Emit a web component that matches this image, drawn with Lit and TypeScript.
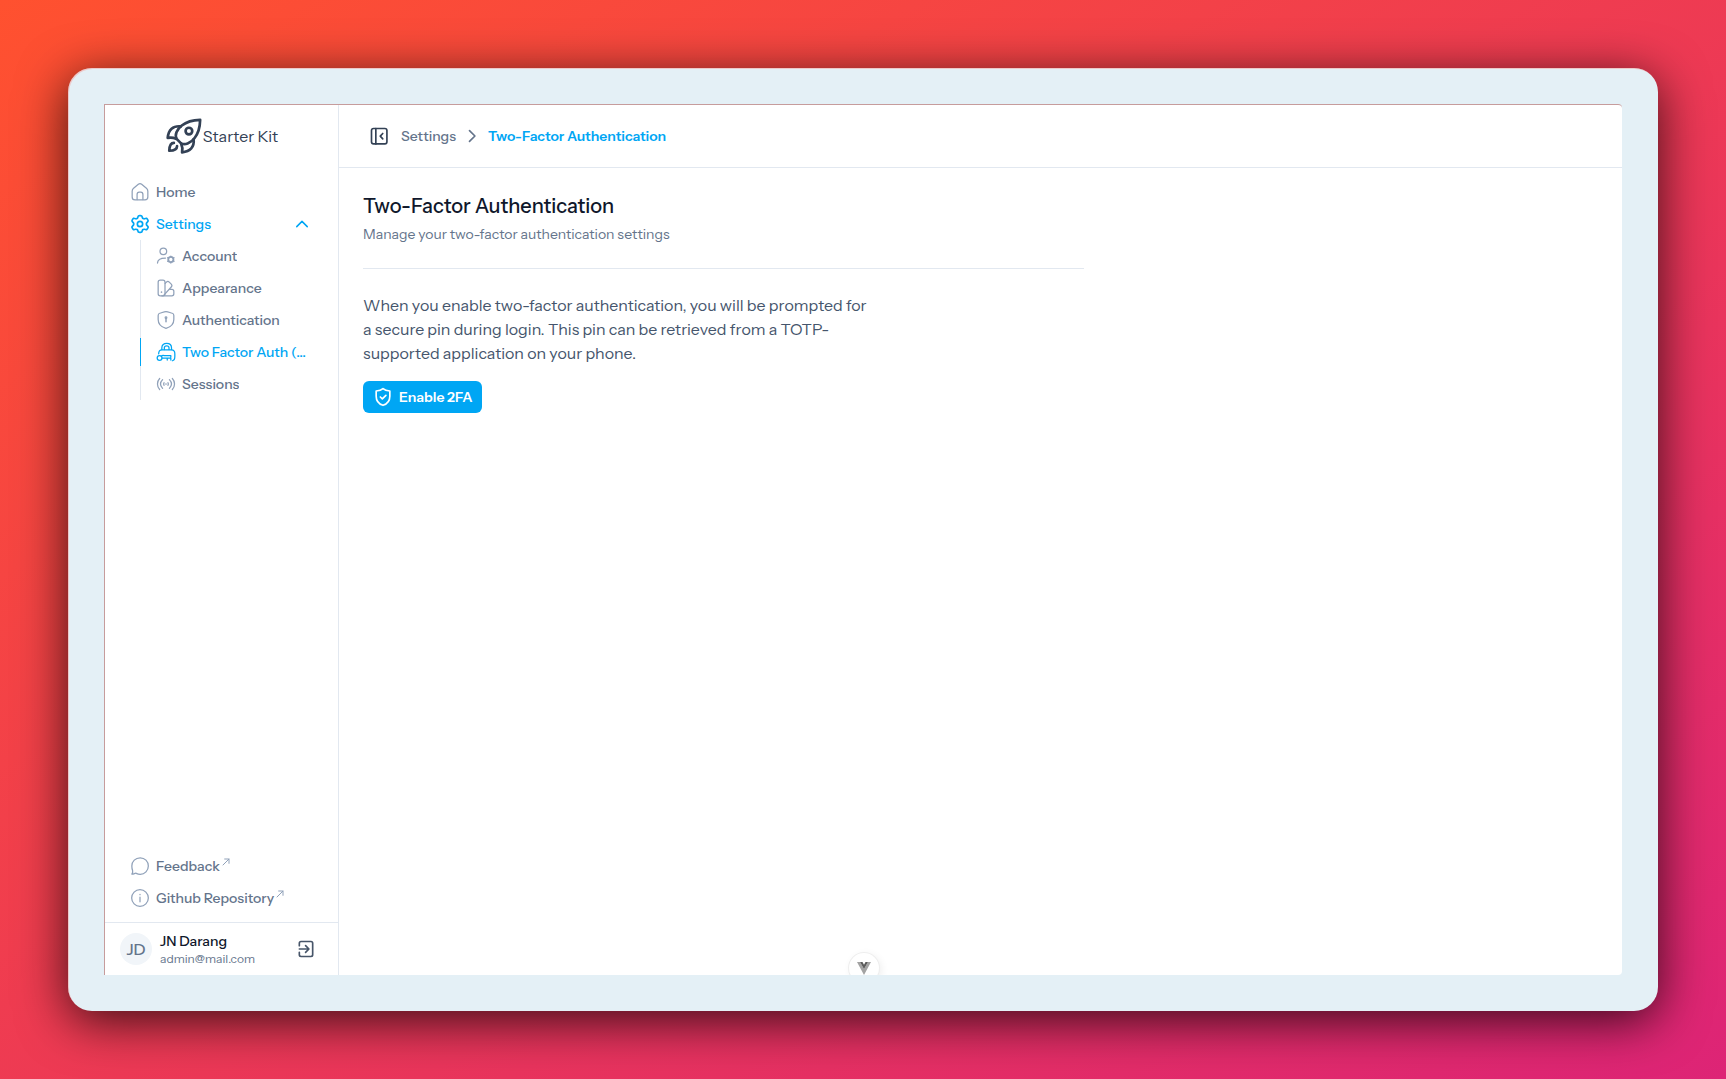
import { LitElement, html, css, svg, nothing } from "lit";
import { customElement, property, state } from "lit/decorators.js";

const icons = {
  rocket: svg`<path d="M7.5 14C5.8 11.6 7.5 7.8 10.6 5.4C13.6 3 17.6 1.9 22.2 1.8C22.1 6.4 21 10.4 18.6 13.4C16.2 16.5 12.4 18.2 10 16.5Z"/><path d="M10 5.9C5 5.4 2.2 8 1.7 13.2C3.8 12.8 5.4 13 7 13.8"/><path d="M18.1 14C18.6 19 16 21.8 10.8 22.3C11.2 20.2 11 18.6 10.2 17"/><circle cx="15.1" cy="8.9" r="2.1"/><path d="M5.6 16.4C3.4 16.4 2.8 18.8 2.7 21.3C5.2 21.2 7.6 20.6 7.6 18.4"/>`,
  home: svg`<path d="M2.6 11C2.6 9.2 3 8.6 4.3 7.5L10 2.7C11.5 1.5 12.5 1.5 14 2.7L19.7 7.5C21 8.6 21.4 9.2 21.4 11V18C21.4 20.5 20.5 21.4 18 21.4H6C3.5 21.4 2.6 20.5 2.6 18Z"/><path d="M8.5 21V15C8.5 12.7 9.2 12 11 12H13C14.8 12 15.5 12.7 15.5 15V21"/>`,
  gear: svg`<path d="M21.3175 7.14139L20.8239 6.28479C20.4506 5.63696 20.264 5.31305 19.9464 5.18388C19.6288 5.05472 19.2696 5.15664 18.5513 5.36048L17.3311 5.70418C16.8725 5.80994 16.3913 5.74994 15.9726 5.53479L15.6357 5.34042C15.2766 5.11043 15.0004 4.77133 14.8475 4.37274L14.5136 3.37536C14.294 2.71534 14.1842 2.38533 13.9228 2.19657C13.6615 2.00781 13.3143 2.00781 12.6199 2.00781H11.5051C10.8108 2.00781 10.4636 2.00781 10.2022 2.19657C9.94085 2.38533 9.83106 2.71534 9.61149 3.37536L9.27753 4.37274C9.12465 4.77133 8.84845 5.11043 8.48937 5.34042L8.15249 5.53479C7.73374 5.74994 7.25259 5.80994 6.79398 5.70418L5.57375 5.36048C4.85541 5.15664 4.49625 5.05472 4.17867 5.18388C3.86109 5.31305 3.67445 5.63696 3.30115 6.28479L2.80757 7.14139C2.45766 7.74864 2.2827 8.05227 2.31666 8.37549C2.35061 8.69871 2.58483 8.95918 3.05326 9.48012L4.0843 10.6328C4.3363 10.9518 4.51521 11.5078 4.51521 12.0077C4.51521 12.5078 4.33636 13.0636 4.08433 13.3827L3.05326 14.5354C2.58483 15.0564 2.35062 15.3168 2.31666 15.6401C2.2827 15.9633 2.45766 16.2669 2.80757 16.8741L3.30114 17.7307C3.67444 18.3785 3.86108 18.7025 4.17866 18.8316C4.49624 18.9608 4.85541 18.8589 5.57374 18.655L6.79394 18.3113C7.25263 18.2055 7.73387 18.2656 8.15267 18.4808L8.48957 18.6752C8.84857 18.9052 9.12468 19.2442 9.2775 19.6428L9.61151 20.6402C9.83108 21.3002 9.94087 21.6302 10.2022 21.819C10.4636 22.0078 10.8108 22.0078 11.5051 22.0078H12.6199C13.3143 22.0078 13.6615 22.0078 13.9228 21.819C14.1842 21.6302 14.294 21.3002 14.5136 20.6402L14.8476 19.6428C15.0004 19.2442 15.2765 18.9052 15.6355 18.6752L15.9724 18.4808C16.3912 18.2656 16.8724 18.2055 17.3311 18.3113L18.5513 18.655C19.2696 18.8589 19.6288 18.9608 19.9464 18.8316C20.264 18.7025 20.4506 18.3785 20.8239 17.7307L21.3175 16.8741C21.6674 16.2669 21.8423 15.9633 21.8084 15.6401C21.7744 15.3168 21.5402 15.0564 21.0718 14.5354L20.0407 13.3827C19.7887 13.0636 19.6098 12.5078 19.6098 12.0077C19.6098 11.5078 19.7888 10.9518 20.0407 10.6328L21.0718 9.48012C21.5402 8.95918 21.7744 8.69871 21.8084 8.37549C21.8423 8.05227 21.6674 7.74864 21.3175 7.14139Z"/><circle cx="12" cy="12" r="3.2"/>`,
  account: svg`<circle cx="8.8" cy="6.4" r="4"/><path d="M1.8 20.5C1.8 16.8 5 14.5 11.4 14.5"/><circle cx="17.8" cy="16.2" r="3.1" stroke-width="2.2"/><path d="M17.8 12V13M17.8 19.5V20.5M14 14L15 14.600M20.600 17.800L21.600 18.400M14 18.400L15 17.800M20.600 14.600L21.600 14"/>`,
  palette: svg`<rect x="2.6" y="2.6" width="8.2" height="18.8" rx="2.5"/><path d="M11 6.5L12.5 5C13.6 3.9 14.8 3.9 15.9 5L18.3 7.4C19.4 8.5 19.4 9.7 18.3 10.8L9.5 20.5"/><path d="M16.5 13.5H19C20.7 13.5 21.4 14.2 21.4 16V19C21.4 20.7 20.7 21.4 19 21.4H7"/><path d="M6.6 17V17.1" stroke-width="2"/>`,
  shield: svg`<path d="M12 1.9C9 1.9 7 3.5 4.5 3.9C3.1 4.2 2.6 4.8 2.6 6.5V11.5C2.6 17.3 6.5 20.6 12 22.1C17.5 20.6 21.4 17.3 21.4 11.5V6.5C21.4 4.8 20.9 4.2 19.5 3.9C17 3.5 15 1.9 12 1.9Z"/><path d="M12 9.5V14" stroke-width="1.8"/><circle cx="12" cy="9.2" r="1"/>`,
  lockKey: svg`<path d="M7 9V6.8C7 3.6 9.400 1.500 12.800 1.500S18.600 3.600 18.600 6.8V9"/><path d="M10 9V7C10 5.400 11 4.500 12.800 4.500S15.600 5.400 15.600 7V9"/><path d="M3.200 14.200C3.200 10.800 4.400 9.300 7 9.300H18.600C21.600 9.300 22.600 10.800 22.600 14V17.500C22.600 20.800 22 22.200 19.600 22.500"/><circle cx="4.300" cy="19.200" r="2.900"/><path d="M6.400 17C7.500 15.700 9 15.900 10 16.300H17.800V18.400M7.200 19.200H17.800V21.700M13.500 19.400V21.700"/>`,
  broadcast: svg`<path d="M4.4 5.4C0.9 9 0.9 15 4.4 18.6M19.6 5.4C23.1 9 23.1 15 19.6 18.6M7.9 6.800C4.800 10 4.800 14 7.9 17.200M16.1 6.800C19.200 10 19.200 14 16.1 17.200"/><path d="M9.7 10.400C9 11.400 9 12.600 9.7 13.600M14.3 10.400C15 11.400 15 12.600 14.3 13.600"/><path d="M12 12V12.1" stroke-width="2"/>`,
  chat: svg`<path d="M12.2 2.1C17.8 2.1 22 6.4 22 12C22 17.6 17.8 21.9 12.2 21.9C10.5 21.9 9 21.5 7.5 20.8C6 20.1 4.8 22 2.2 21.8C3.2 20.5 3.6 19.4 3.1 17.3C2.4 15.6 2.2 14 2.2 12C2.2 6.4 6.6 2.1 12.2 2.1Z"/>`,
  info: svg`<circle cx="12" cy="12" r="10"/><path d="M12 11V16.5M12 7.5V8"/>`,
  arrowUpRight: svg`<path d="M3 21L21 3M8 3H21V16"/>`,
  logout: svg`<path d="M4 8V5C4 3.5 4.5 3 6 3H18C19.5 3 20 3.5 20 5V19C20 20.5 19.5 21 18 21H6C4.5 21 4 20.5 4 19V16"/><path d="M4 12H15M11.5 8L15.5 12L11.5 16"/>`,
  panel: svg`<rect x="3" y="3" width="18.5" height="18.5" rx="2.5"/><path d="M8.2 3V21.5M16.5 9L13.5 12.2L16.5 15.4"/>`,
  chevronUp: svg`<path d="M5 15.5L12 8.5L19 15.5"/>`,
  chevronRight: svg`<path d="M9 5.5L15.5 12L9 18.5"/>`,
  shieldCheck: svg`<path d="M12 2C10 3.8 7 4.6 3.8 4.8V11C3.8 16.6 7 20.3 12 22C17 20.3 20.2 16.6 20.2 11V4.8C17 4.6 14 3.8 12 2Z"/><path d="M8.8 12L11.2 14.3L15.5 10"/>`,
};
type IconName = keyof typeof icons;

@customElement("ui-icon")
class UiIcon extends LitElement {
  @property() name: IconName = "home";
  @property({ type: Number }) weight = 1.5;
  static styles = css`
    :host { display: block; flex: none; width: 20px; height: 20px; }
    svg { display: block; width: 100%; height: 100%; fill: none; stroke: currentColor; stroke-linecap: round; stroke-linejoin: round; }
  `;
  render() {
    return html`<svg viewBox="0 0 24 24" stroke-width=${this.weight} aria-hidden="true">${icons[this.name]}</svg>`;
  }
}

interface NavItem { label: string; icon: IconName; active?: boolean; }

const settingsItems: NavItem[] = [
  { label: "Account", icon: "account" },
  { label: "Appearance", icon: "palette" },
  { label: "Authentication", icon: "shield" },
  { label: "Two Factor Auth (2FA)", icon: "lockKey", active: true },
  { label: "Sessions", icon: "broadcast" },
];
const externalItems: NavItem[] = [
  { label: "Feedback", icon: "chat" },
  { label: "Github Repository", icon: "info" },
];

@customElement("app-sidebar")
class AppSidebar extends LitElement {
  @state() private open = true;
  static styles = css`
    :host { display: flex; flex-direction: column; flex: none; box-sizing: border-box; width: 234px; border-right: 1px solid #e2e8f0; }
    a { color: inherit; text-decoration: none; }
    button { font: inherit; color: inherit; background: none; border: 0; padding: 0; cursor: pointer; text-align: left; }
    .brand { display: flex; align-items: center; justify-content: center; height: 62px; color: #334155; font-size: 16px; }
    .brand ui-icon { width: 38px; height: 38px; }
    nav { display: flex; flex-direction: column; padding: 9px 27px 8px 25px; font-size: 14px; font-weight: 500; color: #64748b; }
    .main { flex: 1; }
    .row { display: flex; align-items: center; gap: 6px; height: 32px; white-space: nowrap; }
    .row ui-icon { color: #90a1b9; }
    .row.active, .row.active ui-icon { color: #00a6f4; }
    .grow { flex: 1; }
    .row ui-icon.chevron { width: 18px; height: 18px; }
    .sub { list-style: none; margin: 0 0 0 10px; padding: 0; border-left: 1px solid #e2e8f0; }
    .sub .row { margin-left: -1px; padding: 0 4px 0 16px; position: relative; }
    .sub .row.active::before { content: ""; position: absolute; left: 0; top: 2px; bottom: 2px; width: 1px; background: #00a6f4; }
    .label { overflow: hidden; text-overflow: ellipsis; }
    .ext { display: flex; align-items: flex-start; gap: 2px; }
    .ext ui-icon { width: 8px; height: 8px; padding-top: 1px; }
    .user { display: flex; align-items: center; gap: 8px; height: 52px; padding: 0 22px 0 15px; border-top: 1px solid #e2e8f0; }
    .avatar { display: flex; align-items: center; justify-content: center; width: 32px; height: 32px; border-radius: 50%; background: #f1f5f9; color: #64748b; font-size: 16px; font-weight: 500; }
    .who { flex: 1; display: flex; flex-direction: column; }
    .name { font-size: 14px; line-height: 20px; font-weight: 500; color: #0f172b; }
    .mail { font-size: 12px; line-height: 16px; color: #64748b; }
    .logout { color: #475569; }
  `;
  render() {
    return html`
      <a class="brand" href="#"><ui-icon name="rocket" weight="1.7"></ui-icon><span>Starter Kit</span></a>
      <nav class="main">
        <a class="row" href="#"><ui-icon name="home"></ui-icon>Home</a>
        <button class="row active" aria-expanded=${this.open} @click=${() => (this.open = !this.open)}>
          <ui-icon name="gear" weight="2"></ui-icon><span class="grow">Settings</span>
          <ui-icon class="chevron" name="chevronUp" weight="2"></ui-icon>
        </button>
        ${this.open
          ? html`<ul class="sub">${settingsItems.map((i) => html`<li>
              <a class="row ${i.active ? "active" : ""}" href="#"><ui-icon name=${i.icon}></ui-icon><span class="label">${i.label}</span></a>
            </li>`)}</ul>`
          : nothing}
      </nav>
      <nav>
        ${externalItems.map((i) => html`<a class="row" href="#"><ui-icon name=${i.icon}></ui-icon>
          <span class="ext">${i.label}<ui-icon name="arrowUpRight" weight="3"></ui-icon></span></a>`)}
      </nav>
      <div class="user">
        <span class="avatar">JD</span>
        <span class="who"><span class="name">JN Darang</span><span class="mail">admin@mail.com</span></span>
        <button class="logout" aria-label="Log out"><ui-icon name="logout" weight="2"></ui-icon></button>
      </div>
    `;
  }
}

@customElement("app-root")
class AppRoot extends LitElement {
  static styles = css`
    :host { display: flex; box-sizing: border-box; min-height: 100vh; padding: 68px; background: linear-gradient(to bottom right, #ff512f, #dd2476); font-family: "Instrument Sans", Inter, "Liberation Sans", sans-serif; }
    .frame { flex: 1; display: flex; padding: 36px; border-radius: 24px; background: #e4f0f6; box-shadow: 0 10px 50px rgba(0, 0, 0, 0.75), inset 1px 1px 0 rgba(255, 130, 120, 0.35); }
    .screen { flex: 1; min-width: 0; display: flex; position: relative; overflow: hidden; background: #fff; border-top: 1px solid #c69c9c; border-left: 1px solid #c69c9c; border-radius: 0 4px 4px 0; }
    .page { flex: 1; min-width: 0; }
    .topbar { display: flex; align-items: center; height: 62px; padding: 0 30px; border-bottom: 1px solid #e2e8f0; font-size: 14px; }
    button { font: inherit; border: 0; cursor: pointer; }
    .toggle { padding: 0; margin-right: 12px; background: none; color: #334155; }
    .crumbs { display: flex; align-items: center; gap: 6px; color: #64748b; font-size: 14px; font-weight: 500; }
    .crumbs a { color: inherit; text-decoration: none; }
    .crumbs .current { color: #00a6f4; font-weight: 600; }
    main { padding: 24px; }
    .intro { max-width: 721px; padding-bottom: 24px; border-bottom: 1px solid #e2e8f0; }
    h1 { margin: 0; font-size: 20px; line-height: 28px; font-weight: 500; color: #0f172b; }
    .intro p { margin: 4px 0 0; font-size: 14px; line-height: 20px; color: #64748b; }
    .body { max-width: 512px; margin: 24px 0 16px; font-size: 16px; line-height: 24px; color: #45556c; }
    .primary { display: flex; align-items: center; gap: 6px; height: 32px; padding: 0 10px; border-radius: 6px; background: #00a6f4; color: #fff; font-size: 14px; font-weight: 600; }
    .devtools { position: absolute; left: 50%; bottom: -8px; transform: translateX(-50%); display: flex; align-items: center; justify-content: center; width: 30px; height: 30px; padding: 0; border-radius: 50%; background: #fff; box-shadow: 0 0 0 1px #eee, 2px 2px 8px rgba(0, 0, 0, 0.08); }
    .devtools svg { width: 14px; height: 13px; }
  `;
  render() {
    return html`
      <div class="frame">
        <div class="screen">
          <app-sidebar></app-sidebar>
          <div class="page">
            <header class="topbar">
              <button class="toggle" aria-label="Collapse sidebar"><ui-icon name="panel" weight="2"></ui-icon></button>
              <nav class="crumbs" aria-label="Breadcrumb">
                <a href="#">Settings</a><ui-icon name="chevronRight" weight="2"></ui-icon>
                <a class="current" href="#">Two-Factor Authentication</a>
              </nav>
            </header>
            <main>
              <div class="intro">
                <h1>Two-Factor Authentication</h1>
                <p>Manage your two-factor authentication settings</p>
              </div>
              <p class="body">When you enable two-factor authentication, you will be prompted for a secure pin during login. This pin can be retrieved from a TOTP-supported application on your phone.</p>
              <button class="primary"><ui-icon name="shieldCheck" weight="2"></ui-icon>Enable 2FA</button>
            </main>
          </div>
          <button class="devtools" aria-label="Toggle devtools">
            <svg viewBox="0 0 14 13" aria-hidden="true"><path fill="#a3a3a3" d="M0 0H3L7 7L11 0H14L7 13Z"/><path fill="#5c5c5c" d="M3 0H5.5L7 2.7L8.5 0H11L7 7Z"/></svg>
          </button>
        </div>
      </div>
    `;
  }
}
